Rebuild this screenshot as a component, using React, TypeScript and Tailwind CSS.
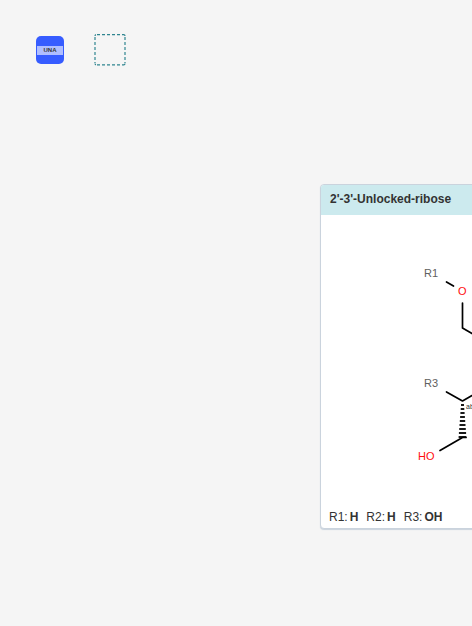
import React from "react";

const attachments = [
  { name: "R1", value: "H" },
  { name: "R2", value: "H" },
  { name: "R3", value: "OH" },
];

const wedgeSteps = [0, 1, 2, 3, 4, 5, 6, 7, 8];

function MonomerTile() {
  return (
    <button
      type="button"
      className="flex h-7 w-7 flex-col justify-center rounded-[5px] bg-[#365cff] px-px outline-none"
    >
      <span className="flex h-[9px] w-full items-center justify-center bg-[#afbeff] text-[6px] leading-[9px] font-bold text-[#333333]">
        UNA
      </span>
    </button>
  );
}

function EmptySlot() {
  return (
    <svg className="h-8 w-8" viewBox="0 0 32 32" fill="none" stroke="#2f8590" strokeWidth="1.2" aria-hidden="true">
      <path d="M3 0.6H30M3 30.8H30" strokeDasharray="3 2" />
      <path d="M1 3V29M31 3V29" strokeDasharray="3 2" />
      <path d="M1 2Q1 0.8 2 0.6M30 0.6Q31 0.8 31 2M1 29.4Q1 30.6 2 30.8M30 30.8Q31 30.6 31 29.4" />
    </svg>
  );
}

function Structure() {
  return (
    <svg
      className="block h-[290px] w-full"
      viewBox="321 215 344 290"
      preserveAspectRatio="xMinYMin meet"
      fontFamily="'Liberation Sans', Arial, sans-serif"
      fontSize="11"
    >
      <g stroke="#000000" strokeWidth="1.7" strokeLinecap="round" strokeLinejoin="round" fill="none">
        <path d="M446.5 282L453.5 286" />
        <path d="M462.5 303V328L494 346" />
        <path d="M446.5 392L462.5 401L494 383" />
        <path d="M466 437.5H462.5L440 450.5" />
      </g>
      <g stroke="#000000" strokeWidth="1.8">
        {wedgeSteps.map((step) => (
          <line
            key={step}
            x1={461 - step * 0.3}
            x2={464 + step * 0.3}
            y1={405 + step * 4}
            y2={405 + step * 4}
          />
        ))}
      </g>
      <text x="424" y="277" fill="#606060">R1</text>
      <text x="424" y="387" fill="#606060">R3</text>
      <text x="458" y="295" fill="#ff0d0d">O</text>
      <text x="418" y="460" fill="#ff0d0d">HO</text>
      <text x="466" y="409" fontSize="7" fill="#333333">abs</text>
    </svg>
  );
}

function PreviewCard() {
  return (
    <section className="absolute top-[184px] left-[320px] w-[346px] overflow-hidden rounded-[4px] border border-[#cad3dd] bg-white shadow-[0_1px_1px_#cad3dd]">
      <h2 className="h-[30px] bg-[#cceaee] px-[9px] text-[12px] leading-[28px] font-bold text-[#333333]">
        2'-3'-Unlocked-ribose
      </h2>
      <Structure />
      <ul className="flex h-[23px] gap-2 px-2 text-[12px] leading-[25px] text-[#333333]">
        {attachments.map((item) => (
          <li key={item.name} className="flex gap-0.5">
            <span>{item.name}:</span>
            <b>{item.value}</b>
          </li>
        ))}
      </ul>
    </section>
  );
}

export default function App() {
  return (
    <main className="relative min-h-screen overflow-hidden bg-[#f5f5f5] font-['Liberation_Sans',Arial,sans-serif]">
      <div className="flex items-center gap-[30px] px-9 pt-[34px]">
        <MonomerTile />
        <EmptySlot />
      </div>
      <PreviewCard />
    </main>
  );
}
